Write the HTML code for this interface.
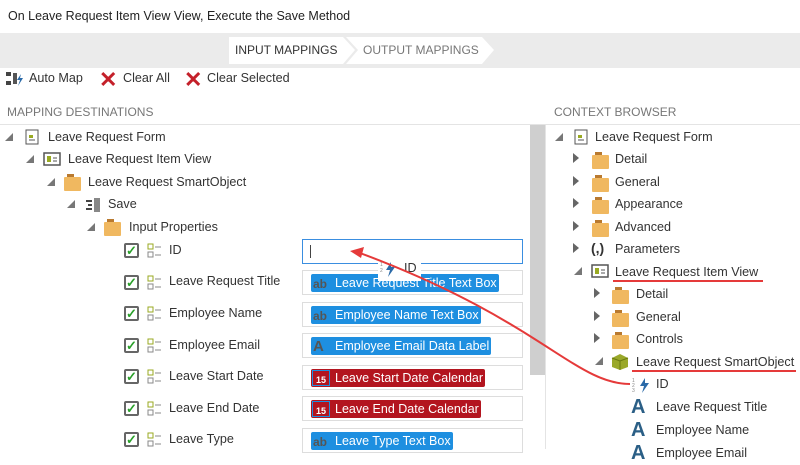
<!DOCTYPE html>
<html><head><meta charset="utf-8"><style>
*{margin:0;padding:0;box-sizing:border-box}
body{width:800px;height:449px;overflow:hidden;background:#fff;font-family:"Liberation Sans",sans-serif;color:#333;position:relative;font-size:12.6px}
.a{position:absolute;white-space:nowrap}
.td{border-left:4px solid transparent;border-right:4px solid #777;border-top:4px solid transparent;border-bottom:4px solid #777;width:0;height:0;position:absolute}
.tr{border-left:6px solid #666;border-top:5px solid transparent;border-bottom:5px solid transparent;position:absolute}
.fold{position:absolute;width:17px;height:14px;background:#f0b860;border-radius:1px}
.fold:before{content:"";position:absolute;left:3px;top:-3px;width:7px;height:3px;background:#b97a30}
.cb{position:absolute;width:15px;height:15px;border:2px solid #666;border-radius:2px;color:#2aa02a;font-size:13px;font-weight:bold;line-height:11px;text-align:center}
.li{position:absolute;width:16px;height:16px}
.box{position:absolute;left:302px;width:221px;height:25px;border:1px solid #ddd;background:#fff}
.pill{position:absolute;left:8px;top:3px;height:18px;background:#1e8fe0;color:#fff;border-radius:2px;font-size:12.5px;line-height:18px;padding-left:24px;padding-right:2px}
.pill i{position:absolute;left:2px;top:1px;font-style:normal;color:#555;font-weight:bold;font-size:12px}
.cal{background:#b3151f}
.cal i{width:18px;height:16px;border:1px solid #1e8fe0;background:#b3151f;color:#fff;font-size:9px;line-height:18px;text-align:center;left:1px;top:1px}
.bigA{position:absolute;font-weight:bold;color:#2b5f86;font-size:20px}
</style></head><body>
<div class="a" style="left:8px;top:9px;font-size:12.5px;color:#222">On Leave Request Item View View, Execute the Save Method</div>
<div class="a" style="left:0;top:33px;width:800px;height:35px;background:#ebebeb"></div>
<svg class="a" style="left:229px;top:37px" width="270" height="27"><polygon points="0,0 114,0 126,13 114,27 0,27" fill="#fff"/><polygon points="117,0 253,0 265,13 253,27 117,27 129,13" fill="#fff"/></svg>
<div class="a" style="left:235px;top:43px;font-size:12px;color:#333">INPUT MAPPINGS</div>
<div class="a" style="left:363px;top:43px;font-size:12px;color:#777">OUTPUT MAPPINGS</div>
<svg class="a" style="left:6px;top:71px" width="18" height="16"><rect x="0" y="1" width="5" height="4" fill="#444"/><rect x="0" y="10" width="5" height="4" fill="#444"/><rect x="7" y="2" width="4" height="11" fill="#555"/><path d="M15 3 L11 9 L14 9 L12 15 L17 7 L14 7 Z" fill="#2b6aa8"/></svg>
<div class="a" style="left:29px;top:71px">Auto Map</div>
<div class="a" style="left:99px;top:67px;color:#c4202a;font-size:22px;font-weight:bold">✕</div>
<div class="a" style="left:123px;top:71px">Clear All</div>
<div class="a" style="left:184px;top:67px;color:#c4202a;font-size:22px;font-weight:bold">✕</div>
<div class="a" style="left:207px;top:71px">Clear Selected</div>
<div class="a" style="left:7px;top:105px;font-size:12px;color:#777">MAPPING DESTINATIONS</div>
<div class="a" style="left:554px;top:105px;font-size:12px;color:#777">CONTEXT BROWSER</div>
<div class="a" style="left:0;top:124px;width:800px;height:1px;background:#e4e4e4"></div>
<div class="a" style="left:530px;top:125px;width:15px;height:250px;background:#cfcfcf"></div>
<div class="a" style="left:545px;top:125px;width:1px;height:324px;background:#e4e4e4"></div>

<div class="td" style="left:5px;top:133px"></div>
<svg class="a" style="left:25px;top:129px" width="14" height="16"><rect x="1" y="1" width="12" height="14" fill="#fff" stroke="#555"/><rect x="4" y="6" width="4" height="3" fill="#9a2"/><line x1="4" y1="11" x2="10" y2="11" stroke="#555"/></svg>
<div class="a" style="left:48px;top:130px">Leave Request Form</div>
<div class="td" style="left:26px;top:155px"></div>
<svg class="a" style="left:43px;top:152px" width="18" height="14"><rect x="1" y="1" width="16" height="12" fill="#fff" stroke="#555" stroke-width="1.5"/><rect x="4" y="4" width="4" height="6" fill="#9a2"/><line x1="10" y1="6" x2="14" y2="6" stroke="#555"/><line x1="10" y1="9" x2="14" y2="9" stroke="#555"/></svg>
<div class="a" style="left:68px;top:152px">Leave Request Item View</div>
<div class="td" style="left:47px;top:178px"></div>
<div class="fold" style="left:64px;top:177px"></div>
<div class="a" style="left:88px;top:175px">Leave Request SmartObject</div>
<div class="td" style="left:67px;top:200px"></div>
<svg class="a" style="left:85px;top:197px" width="16" height="16"><line x1="1" y1="4" x2="7" y2="4" stroke="#444" stroke-width="2"/><line x1="3" y1="8" x2="7" y2="8" stroke="#444" stroke-width="2"/><line x1="1" y1="12" x2="7" y2="12" stroke="#444" stroke-width="2"/><rect x="9" y="1" width="6" height="14" fill="#888"/></svg>
<div class="a" style="left:108px;top:197px">Save</div>
<div class="td" style="left:87px;top:223px"></div>
<div class="fold" style="left:104px;top:222px"></div>
<div class="a" style="left:129px;top:220px">Input Properties</div>

<div class="cb" style="left:124px;top:243px">✓</div>
<svg class="li" style="left:147px;top:243px"><rect x="1" y="1" width="5" height="5" fill="none" stroke="#9a2"/><rect x="1" y="9" width="5" height="5" fill="none" stroke="#888"/><line x1="8" y1="4" x2="14" y2="4" stroke="#888"/><line x1="8" y1="12" x2="14" y2="12" stroke="#888"/></svg>
<div class="a" style="left:169px;top:243px">ID</div>
<div class="box" style="top:239px;border:1px solid #3a8ee0"><div class="a" style="left:7px;top:5px;width:1px;height:13px;background:#444"></div></div>

<div class="cb" style="left:124px;top:275px">✓</div>
<svg class="li" style="left:147px;top:275px"><rect x="1" y="1" width="5" height="5" fill="none" stroke="#9a2"/><rect x="1" y="9" width="5" height="5" fill="none" stroke="#888"/><line x1="8" y1="4" x2="14" y2="4" stroke="#888"/><line x1="8" y1="12" x2="14" y2="12" stroke="#888"/></svg>
<div class="a" style="left:169px;top:274px">Leave Request Title</div>
<div class="box" style="top:270px"><div class="pill"><i>ab</i>Leave Request Title Text Box</div></div>

<div class="cb" style="left:124px;top:306px">✓</div>
<svg class="li" style="left:147px;top:306px"><rect x="1" y="1" width="5" height="5" fill="none" stroke="#9a2"/><rect x="1" y="9" width="5" height="5" fill="none" stroke="#888"/><line x1="8" y1="4" x2="14" y2="4" stroke="#888"/><line x1="8" y1="12" x2="14" y2="12" stroke="#888"/></svg>
<div class="a" style="left:169px;top:306px">Employee Name</div>
<div class="box" style="top:302px"><div class="pill"><i>ab</i>Employee Name Text Box</div></div>

<div class="cb" style="left:124px;top:338px">✓</div>
<svg class="li" style="left:147px;top:338px"><rect x="1" y="1" width="5" height="5" fill="none" stroke="#9a2"/><rect x="1" y="9" width="5" height="5" fill="none" stroke="#888"/><line x1="8" y1="4" x2="14" y2="4" stroke="#888"/><line x1="8" y1="12" x2="14" y2="12" stroke="#888"/></svg>
<div class="a" style="left:169px;top:338px">Employee Email</div>
<div class="box" style="top:333px"><div class="pill"><i style="font-size:15px">A</i>Employee Email Data Label</div></div>

<div class="cb" style="left:124px;top:369px">✓</div>
<svg class="li" style="left:147px;top:369px"><rect x="1" y="1" width="5" height="5" fill="none" stroke="#9a2"/><rect x="1" y="9" width="5" height="5" fill="none" stroke="#888"/><line x1="8" y1="4" x2="14" y2="4" stroke="#888"/><line x1="8" y1="12" x2="14" y2="12" stroke="#888"/></svg>
<div class="a" style="left:169px;top:369px">Leave Start Date</div>
<div class="box" style="top:365px"><div class="pill cal"><i>15</i>Leave Start Date Calendar</div></div>

<div class="cb" style="left:124px;top:401px">✓</div>
<svg class="li" style="left:147px;top:401px"><rect x="1" y="1" width="5" height="5" fill="none" stroke="#9a2"/><rect x="1" y="9" width="5" height="5" fill="none" stroke="#888"/><line x1="8" y1="4" x2="14" y2="4" stroke="#888"/><line x1="8" y1="12" x2="14" y2="12" stroke="#888"/></svg>
<div class="a" style="left:169px;top:401px">Leave End Date</div>
<div class="box" style="top:396px"><div class="pill cal"><i>15</i>Leave End Date Calendar</div></div>

<div class="cb" style="left:124px;top:432px">✓</div>
<svg class="li" style="left:147px;top:432px"><rect x="1" y="1" width="5" height="5" fill="none" stroke="#9a2"/><rect x="1" y="9" width="5" height="5" fill="none" stroke="#888"/><line x1="8" y1="4" x2="14" y2="4" stroke="#888"/><line x1="8" y1="12" x2="14" y2="12" stroke="#888"/></svg>
<div class="a" style="left:169px;top:432px">Leave Type</div>
<div class="box" style="top:428px"><div class="pill"><i>ab</i>Leave Type Text Box</div></div>

<div class="a" style="left:378px;top:257px;width:43px;height:24px;background:#fff"></div>
<svg class="a" style="left:380px;top:260px" width="18" height="18"><text x="0" y="6" font-size="5" fill="#888">1</text><text x="0" y="12" font-size="5" fill="#888">2</text><path d="M11 2 L6 10 L10 10 L8 17 L15 7 L11 7 Z" fill="#2b6aa8"/></svg>
<div class="a" style="left:404px;top:261px">ID</div>

<div class="td" style="left:555px;top:133px"></div>
<svg class="a" style="left:574px;top:129px" width="14" height="16"><rect x="1" y="1" width="12" height="14" fill="#fff" stroke="#555"/><rect x="4" y="6" width="4" height="3" fill="#9a2"/><line x1="4" y1="11" x2="10" y2="11" stroke="#555"/></svg>
<div class="a" style="left:595px;top:130px">Leave Request Form</div>
<div class="tr" style="left:573px;top:153px"></div><div class="fold" style="left:592px;top:155px"></div><div class="a" style="left:615px;top:152px">Detail</div>
<div class="tr" style="left:573px;top:176px"></div><div class="fold" style="left:592px;top:178px"></div><div class="a" style="left:615px;top:175px">General</div>
<div class="tr" style="left:573px;top:198px"></div><div class="fold" style="left:592px;top:200px"></div><div class="a" style="left:615px;top:197px">Appearance</div>
<div class="tr" style="left:573px;top:221px"></div><div class="fold" style="left:592px;top:223px"></div><div class="a" style="left:615px;top:220px">Advanced</div>
<div class="tr" style="left:573px;top:243px"></div><div class="a" style="left:591px;top:240px;font-weight:bold;font-size:14px;color:#333">(,)</div><div class="a" style="left:615px;top:242px">Parameters</div>
<div class="td" style="left:574px;top:267px"></div>
<svg class="a" style="left:591px;top:264px" width="18" height="14"><rect x="1" y="1" width="16" height="12" fill="#fff" stroke="#555" stroke-width="1.5"/><rect x="4" y="4" width="4" height="6" fill="#9a2"/><line x1="10" y1="6" x2="14" y2="6" stroke="#555"/><line x1="10" y1="9" x2="14" y2="9" stroke="#555"/></svg>
<div class="a" style="left:615px;top:265px">Leave Request Item View</div>
<div class="a" style="left:613px;top:280px;width:150px;height:2px;background:#e53a3a"></div>
<div class="tr" style="left:594px;top:288px"></div><div class="fold" style="left:612px;top:290px"></div><div class="a" style="left:636px;top:287px">Detail</div>
<div class="tr" style="left:594px;top:311px"></div><div class="fold" style="left:612px;top:313px"></div><div class="a" style="left:636px;top:310px">General</div>
<div class="tr" style="left:594px;top:333px"></div><div class="fold" style="left:612px;top:335px"></div><div class="a" style="left:636px;top:332px">Controls</div>
<div class="td" style="left:595px;top:357px"></div>
<svg class="a" style="left:611px;top:353px" width="18" height="18"><path d="M9 1 L17 5 L17 14 L9 17 L1 14 L1 5 Z" fill="#9aa82a"/><path d="M1 5 L9 8 L17 5" fill="none" stroke="#6a7a10"/><line x1="9" y1="8" x2="9" y2="17" stroke="#6a7a10"/></svg>
<div class="a" style="left:636px;top:355px">Leave Request SmartObject</div>
<div class="a" style="left:632px;top:370px;width:164px;height:2px;background:#e53a3a"></div>
<svg class="a" style="left:632px;top:376px" width="18" height="18"><text x="0" y="6" font-size="5" fill="#888">1</text><text x="0" y="11" font-size="5" fill="#888">2</text><text x="0" y="16" font-size="5" fill="#888">3</text><path d="M13 2 L8 10 L12 10 L10 17 L17 7 L13 7 Z" fill="#2b6aa8"/></svg>
<div class="a" style="left:656px;top:377px">ID</div>
<div class="bigA" style="left:631px;top:396px">A</div><div class="a" style="left:656px;top:400px">Leave Request Title</div>
<div class="bigA" style="left:631px;top:419px">A</div><div class="a" style="left:656px;top:423px">Employee Name</div>
<div class="bigA" style="left:631px;top:442px">A</div><div class="a" style="left:656px;top:446px">Employee Email</div>

<svg class="a" style="left:0;top:0" width="800" height="449"><path d="M630 384 C 575 384 540 320 360 253" fill="none" stroke="#e53a3a" stroke-width="2"/><path d="M350 251 L364 247 L361 258 Z" fill="#e53a3a"/></svg>
</body></html>
